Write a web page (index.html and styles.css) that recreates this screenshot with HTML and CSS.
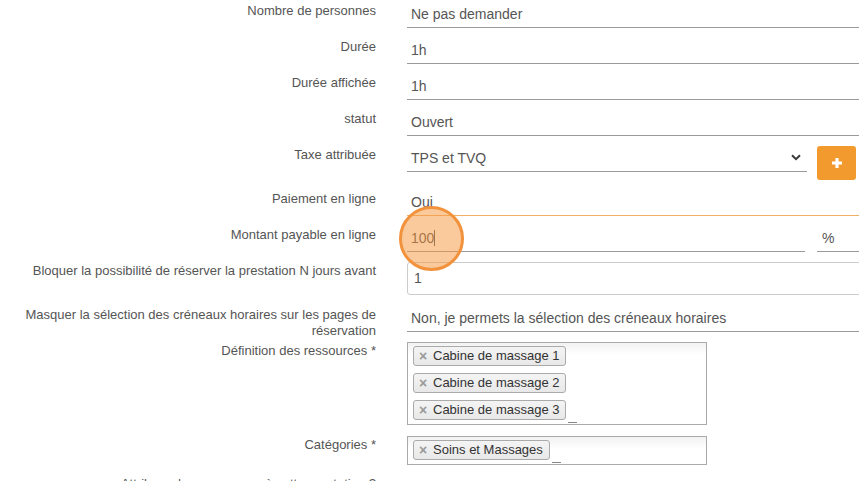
FILE: index.html
```html
<!DOCTYPE html>
<html lang="fr">
<head>
    <meta charset="UTF-8">
    <meta name="viewport" content="width=device-width, initial-scale=1.0">
    <title>Prestation</title>
    <link rel="stylesheet" href="styles.css">
</head>
<body>
    <form class="form">
        <div class="row">
            <label class="lbl">Nombre de personnes</label>
            <div class="field"><div class="ctl">Ne pas demander</div></div>
        </div>
        <div class="row">
            <label class="lbl">Durée</label>
            <div class="field"><div class="ctl">1h</div></div>
        </div>
        <div class="row">
            <label class="lbl">Durée affichée</label>
            <div class="field"><div class="ctl">1h</div></div>
        </div>
        <div class="row">
            <label class="lbl">statut</label>
            <div class="field"><div class="ctl">Ouvert</div></div>
        </div>
        <div class="row">
            <label class="lbl">Taxe attribuée</label>
            <div class="field field-inline">
                <div class="ctl select">
                    <span>TPS et TVQ</span>
                    <svg class="chevron" width="10" height="7" viewBox="0 0 10 7"><path d="M1 1.2 L5 5.2 L9 1.2" fill="none" stroke="#3a3a3a" stroke-width="2"/></svg>
                </div>
                <button type="button" class="btn-add">
                    <svg width="12" height="12" viewBox="0 0 12 12"><path d="M6 1 V11 M1 6 H11" stroke="#fff" stroke-width="3.2"/></svg>
                </button>
            </div>
        </div>
        <div class="row">
            <label class="lbl">Paiement en ligne</label>
            <div class="field"><div class="ctl ctl-active">Oui</div></div>
        </div>
        <div class="row">
            <label class="lbl">Montant payable en ligne</label>
            <div class="field field-inline field-mark">
                <div class="ctl grow">100<span class="caret"></span></div>
                <div class="ctl addon">%</div>
                <!-- repère de clic -->
                <span class="click-mark"></span>
            </div>
        </div>
        <div class="row row-box">
            <label class="lbl">Bloquer la possibilité de réserver la prestation N jours avant</label>
            <div class="field"><div class="box-input">1</div></div>
        </div>
        <div class="row">
            <label class="lbl">Masquer la sélection des créneaux horaires sur les pages de réservation</label>
            <div class="field"><div class="ctl">Non, je permets la sélection des créneaux horaires</div></div>
        </div>
        <div class="row row-box">
            <label class="lbl">Définition des ressources *</label>
            <div class="field">
                <div class="multi">
                    <span class="tag"><span class="tag-x">×</span>Cabine de massage 1</span>
                    <span class="tag"><span class="tag-x">×</span>Cabine de massage 2</span>
                    <span class="tag"><span class="tag-x">×</span>Cabine de massage 3</span>
                    <span class="search"></span>
                </div>
            </div>
        </div>
        <div class="row">
            <label class="lbl">Catégories *</label>
            <div class="field">
                <div class="multi">
                    <span class="tag"><span class="tag-x">×</span>Soins et Massages</span>
                    <span class="search"></span>
                </div>
            </div>
        </div>
        <div class="row">
            <label class="lbl">Attribuer des ressources à cette prestation ?</label>
            <div class="field"></div>
        </div>
    </form>
</body>
</html>
```
FILE: styles.css
```css
* {
    margin: 0;
    padding: 0;
    box-sizing: border-box;
}

body {
    font-family: 'Liberation Sans', Arial, sans-serif;
    background: #fff;
    color: #555;
    overflow: hidden;
    height: 481px;
}

.form {
    width: 859px;
    margin-top: -6px;
}

.row {
    display: grid;
    grid-template-columns: 376px 452px;
    column-gap: 31px;
    margin-bottom: 2px;
}

.row-box {
    margin-bottom: 3px;
}

.lbl {
    height: 34px;
    padding-top: 9px;
    text-align: right;
    font-size: 13px;
    line-height: 16px;
    color: #555;
}

.field {
    min-width: 0;
}

.field-inline {
    display: flex;
    align-items: flex-start;
}

.field-mark {
    position: relative;
}

.ctl {
    height: 34px;
    padding: 11px 4px 0;
    font-size: 14px;
    line-height: 18px;
    color: #555;
    border-bottom: 1px solid #9a9a9a;
    white-space: nowrap;
}

.ctl-active {
    border-bottom-color: #f2b066;
}

.grow {
    flex: 1;
}

.select {
    flex: 1;
    display: flex;
    justify-content: space-between;
}

.chevron {
    margin-top: 5px;
    margin-right: 2px;
}

.btn-add {
    width: 39px;
    height: 34px;
    margin: 8px 3px 0 10px;
    border: none;
    border-radius: 3px;
    background-color: #f39a2e;
    display: flex;
    justify-content: center;
    align-items: center;
    cursor: pointer;
}

.addon {
    width: 42px;
    margin-left: 12px;
    padding-left: 5px;
}

.caret {
    display: inline-block;
    width: 1px;
    height: 16px;
    background: #555;
    vertical-align: -3px;
}

.click-mark {
    position: absolute;
    left: -8px;
    top: -12px;
    width: 65px;
    height: 65px;
    border-radius: 50%;
    border: 3px solid #f2923c;
    background: rgba(246, 150, 60, 0.5);
}

.box-input {
    height: 33px;
    margin-top: 8px;
    margin-right: -6px;
    padding-left: 6px;
    border: 1px solid #ccc;
    border-radius: 3px;
    font-size: 14px;
    line-height: 31px;
    color: #555;
}

.multi {
    width: 300px;
    margin-top: 8px;
    padding: 3px 5px 4px;
    border: 1px solid #aaa;
    background: linear-gradient(to bottom, #f2f2f2 0, #fff 12px);
    display: flex;
    flex-wrap: wrap;
    align-items: flex-start;
    row-gap: 7px;
}

.tag {
    height: 20px;
    padding: 0 6px 0 4px;
    border: 1px solid #aaa;
    border-radius: 3px;
    background: linear-gradient(to bottom, #f4f4f4, #e8e8e8);
    font-size: 13px;
    line-height: 18px;
    color: #333;
    display: flex;
    align-items: center;
    white-space: nowrap;
}

.tag-x {
    width: 10px;
    margin-right: 5px;
    font-size: 14px;
    font-weight: bold;
    color: #999;
    text-align: center;
}

.search {
    width: 9px;
    height: 23px;
    margin-left: 2px;
    margin-bottom: -3px;
    border-bottom: 1px solid #888;
}
```
